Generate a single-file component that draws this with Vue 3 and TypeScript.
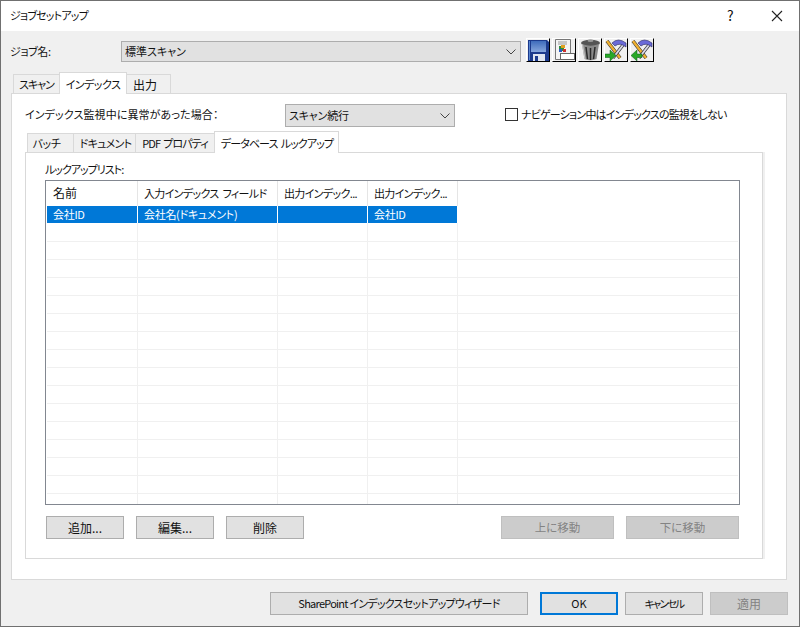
<script setup lang="ts">
const columns = ['名前', '入力インデックス フィールド', '出力インデック...', '出力インデック...']
const selected = ['会社ID', '会社名(ドキュメント)', '', '会社ID']
const emptyRows = Array.from({ length: 15 }, (_, i) => i)
</script>

<template>
  <div class="window">
    <span class="desktop-edge"></span>
    <header class="titlebar">
      <span class="title">ジョブセットアップ</span>
      <span class="help">?</span>
      <svg class="close" width="12" height="12" viewBox="0 0 12 12"><path d="M1 1L11 11M11 1L1 11" stroke="#222" stroke-width="1.1" fill="none" /></svg>
    </header>

    <main class="body">
      <div class="job-row">
        <label class="job-label">ジョブ名:</label>
        <div class="combo job-combo">
          <span>標準スキャン</span>
          <svg class="chev" width="10" height="6" viewBox="0 0 10 6"><path d="M.5 .5L5 5L9.500 .5" stroke="#444" fill="none" /></svg>
        </div>
        <div class="tools">
          <button class="tool">
            <svg width="21" height="21" viewBox="0 0 21 21">
              <defs>
                <linearGradient id="disk" x1="0" y1="0" x2="0" y2="1">
                  <stop offset="0" stop-color="#3f6cbc" />
                  <stop offset="1" stop-color="#86a6dc" />
                </linearGradient>
              </defs>
              <path d="M0 0H19L21 2V21H0Z" fill="#1c3a8c" />
              <path d="M3 1H18V12H3Z" fill="url(#disk)" />
              <path d="M1 1H2V20H1Z" fill="#5a86d0" />
              <path d="M5 14H17V21H5Z" fill="#dfe5f0" />
              <path d="M7 16H10V21H7Z" fill="#1c3a8c" />
            </svg>
          </button>
          <button class="tool">
            <svg width="22" height="22" viewBox="0 0 22 22">
              <path d="M2.500 .5H17.500V20.500H2.500Z" fill="#f4f4f4" stroke="#777" />
              <path d="M5 3H14M5 5H14" stroke="#999" />
              <rect x="6" y="7" width="5" height="5" fill="#2d8c3c" />
              <rect x="8" y="6" width="4" height="3" fill="#e0a020" />
              <rect x="6" y="10" width="3" height="3" fill="#2b5cc4" />
              <rect x="10" y="10" width="3" height="3" fill="#d03030" />
              <rect x="7.500" y="14.500" width="14" height="6" fill="#fff" stroke="#666" />
            </svg>
          </button>
          <button class="tool">
            <svg width="21" height="22" viewBox="0 0 21 22">
              <ellipse cx="10.500" cy="4" rx="9.500" ry="3.200" fill="#555" />
              <ellipse cx="10.500" cy="1.800" rx="3" ry="1.300" fill="#999" />
              <path d="M2 5L4.500 20Q10.500 22.500 16.500 20L19 5Q10.500 8.500 2 5Z" fill="#8a8a8a" />
              <path d="M6 8L7.500 20M10.500 9V21M15 8L13.500 20" stroke="#2a2a2a" stroke-width="1.500" />
              <path d="M2.500 5.500L5 20" stroke="#c4c4c4" stroke-width="1.200" />
            </svg>
          </button>
          <button class="tool">
            <svg width="22" height="22" viewBox="0 0 22 22">
              <path d="M2 2L15 19" stroke="#333" stroke-width="3.600" />
              <path d="M2 2L15 19" stroke="#f0b030" stroke-width="2.400" />
              <path d="M8 19L18 6" stroke="#333" stroke-width="3.200" />
              <path d="M8 19L18 6" stroke="#d8d8e8" stroke-width="2" />
              <path d="M7 4Q13 -2 21 4L21 8Q15 3 10 7Z" fill="#6a6ad8" stroke="#2a2a60" stroke-width=".6" />
              <path d="M0 15H5V11L11 16.500L5 22V18.500H0Z" fill="#28a828" stroke="#0e5a18" stroke-width=".5" />
            </svg>
          </button>
          <button class="tool">
            <svg width="22" height="22" viewBox="0 0 22 22">
              <path d="M2 2L15 19" stroke="#333" stroke-width="3.600" />
              <path d="M2 2L15 19" stroke="#f0b030" stroke-width="2.400" />
              <path d="M8 19L18 6" stroke="#333" stroke-width="3.200" />
              <path d="M8 19L18 6" stroke="#d8d8e8" stroke-width="2" />
              <path d="M7 4Q13 -2 21 4L21 8Q15 3 10 7Z" fill="#6a6ad8" stroke="#2a2a60" stroke-width=".6" />
              <path d="M11 15H6V11L0 16.500L6 22V18.500H11Z" fill="#28a828" stroke="#0e5a18" stroke-width=".5" />
            </svg>
          </button>
        </div>
      </div>

      <div class="tabs outer-tabs">
        <span class="tab tab-scan">スキャン</span>
        <span class="tab tab-index active">インデックス</span>
        <span class="tab tab-output">出力</span>
      </div>

      <section class="panel">
        <div class="index-row">
          <span class="index-label">インデックス監視中に異常があった場合：</span>
          <div class="combo index-combo">
            <span>スキャン続行</span>
            <svg class="chev" width="10" height="6" viewBox="0 0 10 6"><path d="M.5 .5L5 5L9.500 .5" stroke="#444" fill="none" /></svg>
          </div>
          <label class="check-label"><span class="checkbox"></span><span class="check-text">ナビゲーション中はインデックスの監視をしない</span></label>
        </div>

        <div class="tabs inner-tabs">
          <span class="tab tab-batch">バッチ</span>
          <span class="tab tab-doc">ドキュメント</span>
          <span class="tab tab-pdf">PDF プロパティ</span>
          <span class="tab tab-db active">データベース ルックアップ</span>
        </div>

        <section class="inner-panel">
          <div class="list-label">ルックアップリスト:</div>
          <div class="list">
            <div class="row head">
              <span v-for="c in columns" :key="c" class="cell">{{ c }}</span>
            </div>
            <div class="row selected">
              <span v-for="(c, i) in selected" :key="i" class="cell">{{ c }}</span>
            </div>
            <div v-for="r in emptyRows" :key="r" class="row empty">
              <span v-for="c in 4" :key="c" class="cell"></span>
            </div>
            <div class="row tail">
              <span v-for="c in 4" :key="c" class="cell"></span>
            </div>
          </div>
          <div class="list-buttons">
            <button class="btn">追加...</button>
            <button class="btn">編集...</button>
            <button class="btn">削除</button>
            <span class="spacer"></span>
            <button class="btn wide disabled">上に移動</button>
            <button class="btn wide disabled">下に移動</button>
          </div>
        </section>
      </section>

      <footer class="footer">
        <button class="btn sharepoint">SharePoint インデックスセットアップウィザード</button>
        <button class="btn ok">OK</button>
        <button class="btn cancel">キャンセル</button>
        <button class="btn apply disabled">適用</button>
      </footer>
    </main>
  </div>
</template>

<style>
html, body { margin: 0; padding: 0; background: #f0f0f0; }
</style>

<style scoped>
* { box-sizing: border-box; }
.window {
  width: 800px;
  height: 627px;
  position: relative;
  display: flex;
  flex-direction: column;
  background: #f0f0f0;
  border: 1px solid #707070;
  font-family: "Noto Sans CJK JP", "Noto Sans", sans-serif;
  font-size: 11px;
  font-feature-settings: "palt";
  color: #111;
  overflow: hidden;
}
.desktop-edge {
  position: absolute;
  left: -1px;
  top: 137px;
  width: 1px;
  height: 20px;
  background: #1a5a8a;
}
.titlebar {
  height: 30px;
  flex: none;
  background: #fff;
  display: flex;
  align-items: center;
  padding: 0 0 3px 9px;
  position: relative;
}
.title { flex: 1; letter-spacing: -0.8px; }
.help { position: absolute; left: 726px; top: 4px; font-size: 14px; }
.close { position: absolute; left: 770px; top: 9px; }
.body { flex: 1; display: flex; flex-direction: column; min-height: 0; }
.job-row { display: flex; align-items: flex-start; height: 40px; padding: 7px 0 0 9px; }
.job-label { width: 111px; padding-top: 5px; letter-spacing: -0.4px; }
.job-row .combo { margin-top: 3px; }
.combo {
  height: 21px;
  background: #e1e1e1;
  border: 1px solid #adadad;
  display: flex;
  align-items: center;
  justify-content: space-between;
  padding: 0 4px 2px 3px;
}
.combo .chev { margin-top: 2px; }
.job-combo { width: 400px; }
.tools { display: flex; gap: 2px; margin-left: 5px; }
.tool {
  width: 24px;
  height: 24px;
  padding: 0;
  background: #f0f0f0;
  border: 1px solid;
  border-color: #fff #000 #000 #fff;
  display: flex;
  align-items: center;
  justify-content: center;
}
.tabs { display: flex; align-items: flex-end; }
.tab {
  height: 19px;
  background: #f0f0f0;
  border: 1px solid #d9d9d9;
  border-bottom: none;
  margin-left: -1px;
  display: flex;
  align-items: center;
  justify-content: center;
  white-space: nowrap;
}
.tab.active {
  height: 22px;
  background: #fff;
  margin-bottom: -1px;
  position: relative;
  z-index: 2;
}
.outer-tabs { height: 22px; padding-left: 13px; position: relative; z-index: 1; }
.tab-scan { width: 47px; letter-spacing: -1px; }
.tab-index { width: 68px; letter-spacing: -0.5px; }
.tab-output { width: 45px; font-size: 12px; padding-right: 7px; }
.panel {
  margin: 0 12px 0 10px;
  height: 487px;
  background: #fff;
  border: 1px solid #d9d9d9;
  padding: 10px 0 0 13px;
}
.index-row { display: flex; align-items: center; height: 23px; }
.index-label { width: 260px; letter-spacing: 0.1px; white-space: nowrap; padding-bottom: 3px; }
.index-combo { width: 170px; height: 23px; letter-spacing: -0.2px; }
.check-label { display: flex; align-items: center; margin-left: 50px; padding-bottom: 2px; }
.check-text { letter-spacing: -0.8px; padding-bottom: 1px; }
.checkbox { width: 13px; height: 13px; border: 1px solid #333; background: #fff; margin-right: 3px; }
.inner-tabs { height: 22px; margin-top: 3px; padding-left: 3px; position: relative; z-index: 1; }
.tab-batch { width: 47px; letter-spacing: -0.4px; padding-right: 8px; }
.tab-doc { width: 63px; letter-spacing: -0.7px; padding-left: 2px; }
.tab-pdf { width: 80px; letter-spacing: -0.9px; word-spacing: 1.5px; }
.tab-db { width: 125px; letter-spacing: -0.95px; word-spacing: 2px; padding-left: 1px; }
.inner-panel {
  width: 738px;
  height: 407px;
  background: #fff;
  border: 1px solid #d9d9d9;
  box-shadow: 2px 0 0 #f0f0f0;
  padding: 9px 0 0 19px;
}
.list-label { height: 18px; line-height: 14px; letter-spacing: -1px; }
.list {
  width: 695px;
  height: 325px;
  border: 1px solid #828790;
  padding: 0 1px;
  overflow: hidden;
}
.row { display: grid; grid-template-columns: 91px 140px 90px 90px 1fr; }
.cell { padding-left: 6px; border-right: 1px solid #f0f0f0; white-space: nowrap; overflow: hidden; }
.head { height: 25px; background: #fff; letter-spacing: -0.65px; word-spacing: 2px; }
.head .cell { border-right-color: #e5e5e5; line-height: 24px; }
.head .cell:nth-child(1) { font-size: 12px; letter-spacing: 0; }
.selected { height: 17px; color: #fff; letter-spacing: -0.3px; }
.selected .cell { background: #0078d7; border-right: 1px solid #fff; line-height: 16px; }
.empty { height: 18px; border-bottom: 1px solid #f0f0f0; }
.selected + .empty { height: 19px; }
.tail { height: 10px; }
.list-buttons { display: flex; gap: 12px; margin-top: 11px; padding-left: 1px; width: 694px; }
.spacer { flex: 1; }
.btn {
  width: 78px;
  height: 23px;
  padding: 0 0 1px;
  background: #e1e1e1;
  border: 1px solid #adadad;
  font: inherit;
  font-size: 12px;
  font-feature-settings: inherit;
  color: #111;
}
.btn.wide { width: 113px; font-size: 11.500px; }
.btn.disabled { background: #cccccc; border-color: #bfbfbf; color: #838383; }
.footer { display: flex; margin-top: 12px; padding-left: 269px; }
.btn.sharepoint { width: 258px; font-size: 11px; letter-spacing: -0.75px; }
.btn.ok { margin-left: 12px; border: 2px solid #0078d7; font-size: 11px; }
.btn.cancel { margin-left: 7px; font-size: 10.500px; letter-spacing: -1.8px; }
.btn.apply { margin-left: 7px; }
</style>
